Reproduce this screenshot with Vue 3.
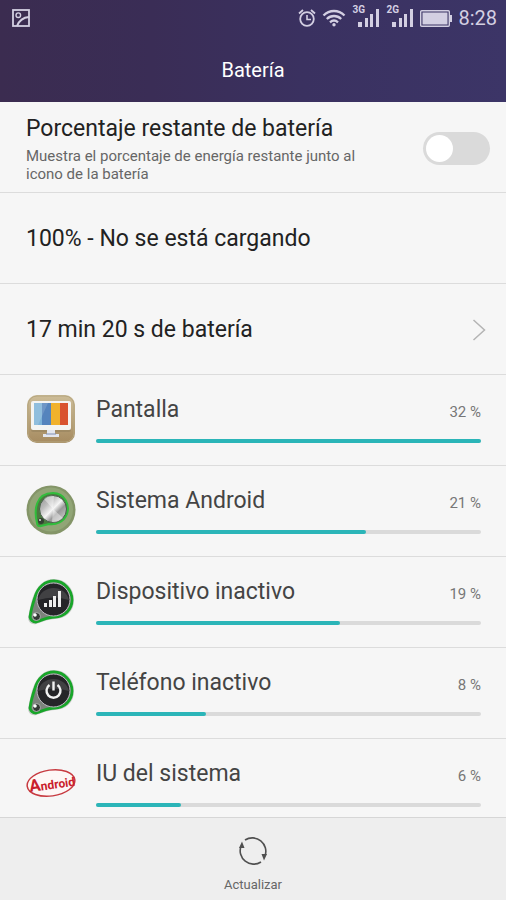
<script setup>
import { ref } from 'vue'

const showPercentage = ref(false)

const usage = [
  { id: 'screen', name: 'Pantalla', percent: 32, bar: 100 },
  { id: 'system', name: 'Sistema Android', percent: 21, bar: 70 },
  { id: 'idle', name: 'Dispositivo inactivo', percent: 19, bar: 63.4 },
  { id: 'phone', name: 'Teléfono inactivo', percent: 8, bar: 28.5 },
  { id: 'ui', name: 'IU del sistema', percent: 6, bar: 22 },
]
</script>

<template>
  <div class="battery-page">
    <header class="header">
      <div class="status-bar">
        <svg class="picture-icon" viewBox="0 0 18 18" width="18" height="18">
          <rect x="1" y="1" width="16" height="16" fill="none" stroke="currentColor" stroke-width="1.8" />
          <circle cx="6.3" cy="6.2" r="2.3" fill="none" stroke="currentColor" stroke-width="1.4" />
          <path d="M5 17C7 12 10 8.500 17 8" fill="none" stroke="currentColor" stroke-width="2" />
        </svg>
        <div class="status-right">
          <svg viewBox="0 0 18 20" width="18" height="20" fill="none" stroke="currentColor">
            <circle cx="9" cy="11" r="6.800" stroke-width="1.8" />
            <path d="M9 7v4.500h4" stroke-width="1.6" />
            <path d="M1 5.500L5 2M17 5.500L13 2" stroke-width="1.8" />
          </svg>
          <svg viewBox="0 0 24 18" width="24" height="18" fill="none" stroke="currentColor" stroke-width="2.300">
            <path d="M1.500 6.500C7.500 .5 16.500 .5 22.500 6.500" />
            <path d="M4.800 10C9 6 15 6 19.200 10" />
            <path d="M8 13.300C10.500 11 13.500 11 16 13.300" />
            <circle cx="12" cy="15.700" r="1.700" fill="currentColor" stroke="none" />
          </svg>
          <div v-for="net in ['3G', '2G']" :key="net" class="signal">
            <span>{{ net }}</span>
            <svg viewBox="0 0 22 18" width="22" height="18" fill="currentColor">
              <rect x="0" y="13" width="4" height="5" />
              <rect x="7" y="9" width="3" height="9" />
              <rect x="12" y="5" width="3" height="13" />
              <rect x="18" y="0" width="3" height="18" />
            </svg>
          </div>
          <svg class="battery-icon" viewBox="0 0 32 17" width="32" height="17">
            <rect x=".7" y=".7" width="28.600" height="15.600" rx="1" fill="none" stroke="currentColor" stroke-width="1.400" />
            <rect x="2.500" y="2.500" width="25" height="12" fill="currentColor" />
            <rect x="29.500" y="5" width="2.500" height="7" fill="currentColor" />
          </svg>
          <span class="clock">8:28</span>
        </div>
      </div>
      <h1>Batería</h1>
    </header>

    <main class="content">
      <label class="row setting">
        <span class="setting-text">
          <span class="label">Porcentaje restante de batería</span>
          <span class="hint">Muestra el porcentaje de energía restante junto al icono de la batería</span>
        </span>
        <input v-model="showPercentage" class="switch" type="checkbox" role="switch" />
      </label>

      <div class="row">
        <span class="label">100% - No se está cargando</span>
      </div>

      <a class="row link" href="#">
        <span class="label">17 min 20 s de batería</span>
        <svg viewBox="0 0 14 22" width="14" height="22" fill="none" stroke="#b4b4b4" stroke-width="1.500">
          <path d="M1.500 1L12.500 11L1.500 21" />
        </svg>
      </a>

      <div v-for="item in usage" :key="item.id" class="row usage">
        <!-- monitor -->
        <svg v-if="item.id === 'screen'" class="app-icon" viewBox="0 0 50 50">
          <defs>
            <linearGradient id="tan" x1="0" y1="0" x2="0" y2="1">
              <stop offset="0" stop-color="#cdbd98" />
              <stop offset="1" stop-color="#a68b60" />
            </linearGradient>
          </defs>
          <rect x="1" y="1" width="48" height="48" rx="10" fill="url(#tan)" />
          <rect x="2" y="2" width="46" height="46" rx="9" fill="none" stroke="#b5a680" />
          <rect x="5" y="9" width="40" height="29" rx="2" fill="#8f7d59" opacity=".5" />
          <rect x="5" y="7" width="40" height="29" rx="2" fill="#f4f4f2" />
          <rect x="8" y="9" width="8" height="22" fill="#7db3d8" />
          <rect x="16" y="9" width="9" height="22" fill="#5584bd" />
          <rect x="25" y="9" width="9" height="22" fill="#f1b22c" />
          <rect x="34" y="9" width="8" height="22" fill="#d9532f" />
          <path d="M8 9h14L12 31H8z" fill="#fff" opacity=".15" />
          <path d="M21 36h8v4h4v3H17v-3h4z" fill="#e4e7ef" />
          <path d="M20 40h10" stroke="#8190b4" />
        </svg>

        <!-- metal dial -->
        <svg v-else-if="item.id === 'system'" class="app-icon" viewBox="0 0 50 50">
          <defs>
            <linearGradient id="metal" x1="0" y1="0" x2="1" y2="1">
              <stop offset="0" stop-color="#8c8c8c" />
              <stop offset=".3" stop-color="#bdbdbd" />
              <stop offset=".5" stop-color="#f5f5f5" />
              <stop offset=".65" stop-color="#999" />
              <stop offset="1" stop-color="#ddd" />
            </linearGradient>
          </defs>
          <circle cx="25" cy="25" r="24.500" fill="#849568" />
          <circle cx="25" cy="24.500" r="22" fill="#91a576" />
          <path d="M11 38C8 26 9 8 27 8C39 8 44 20 41 29C38 37 30 40 23 39L15 41Q11 42 11 38z" fill="#4a7b3f" stroke="#31bd3c" stroke-width="2" />
          <circle cx="27" cy="24" r="13.500" fill="url(#metal)" stroke="#48604a" />
          <path d="M27 24L18 14Q22 10 28 11zM27 24L37 33Q32 38 26 37z" fill="#fff" opacity=".4" />
          <circle cx="15" cy="36" r="3" fill="#344332" />
          <circle cx="14" cy="35" r="1" fill="#ddd" />
        </svg>

        <!-- dark badge with signal bars or power symbol -->
        <svg v-else-if="item.id === 'idle' || item.id === 'phone'" class="app-icon" viewBox="0 0 50 50">
          <path d="M3 42C5 32 6 26 8 21C12 10 19 4 28 4C39 4 47 13 47 24C47 35 39 42 29 42C22 42 17 45 10 47Q4 48 3 42z" fill="#9ca39c" stroke="#c5c9c5" stroke-width="2" />
          <path d="M4 41C5 33 7 27 9 21C12 11 19 5 28 5C38 5 46 14 46 24C46 34 38 41 29 41C21 41 17 44 10 46Q5 46 4 41z" fill="#7c837c" stroke="#18a629" stroke-width="2.800" />
          <circle cx="27.500" cy="23.500" r="16.500" fill="#252528" stroke="#bdb9c1" stroke-width="1" />
          <path d="M12 24A16 16 0 0 1 43 24Q28 19 12 24z" fill="#fff" opacity=".13" />
          <circle cx="10.500" cy="40.500" r="4" fill="#343936" stroke="#adb2ae" />
          <circle cx="9" cy="39" r="1.800" fill="#fff" />
          <g v-if="item.id === 'idle'" fill="#eee">
            <rect x="18" y="27" width="3" height="4" />
            <rect x="23" y="24" width="3" height="7" />
            <rect x="27" y="20" width="3" height="11" />
            <rect x="32" y="15" width="3" height="16" />
          </g>
          <path v-else d="M23.500 18A7 7 0 1 0 31.500 18M27.500 14.500v9" fill="none" stroke="#f2f2f2" stroke-width="2.400" />
        </svg>

        <!-- red wordmark -->
        <svg v-else class="app-icon" viewBox="0 0 50 50">
          <g transform="rotate(-8 25 25)" fill="#c9202b">
            <ellipse cx="25" cy="25" rx="24" ry="13" fill="#fdf7f6" stroke="#c73a40" stroke-width="1.500" />
            <text class="logo-text" x="3" y="31"><tspan class="logo-initial">A</tspan>ndroid</text>
          </g>
        </svg>

        <div class="usage-body">
          <div class="usage-head">
            <span class="usage-name">{{ item.name }}</span>
            <span class="usage-percent">{{ item.percent }} %</span>
          </div>
          <div class="track">
            <div class="fill" :style="{ width: item.bar + '%' }"></div>
          </div>
        </div>
      </div>
    </main>

    <footer class="footer">
      <button type="button" class="refresh">
        <svg viewBox="0 0 30 30" width="30" height="30">
          <path d="M7 4A13.500 13.500 0 0 1 27 20M23 26A13.500 13.500 0 0 1 3 10" fill="none" stroke="#505050" stroke-width="1.600" />
          <path d="M4 5.500L6.500 12L1 12z M26 24.500L23.500 18L29 18z" fill="#505050" />
        </svg>
        <span>Actualizar</span>
      </button>
    </footer>
  </div>
</template>

<style>
body {
  margin: 0;
  background: #f6f6f6;
}
</style>

<style scoped>
.battery-page {
  display: flex;
  flex-direction: column;
  height: 100vh;
  font-family: Roboto, "Liberation Sans", sans-serif;
  color: #222;
}

.header {
  flex: none;
  height: 102px;
  background: linear-gradient(90deg, #3b2c50 0%, #3a2d56 30%, #3a3160 60%, #3c3567 100%);
  color: #fff;
}

.status-bar {
  display: flex;
  align-items: center;
  justify-content: space-between;
  height: 36px;
  padding: 0 9px 0 12px;
  color: #d3cfe2;
}

.status-right {
  display: flex;
  align-items: center;
  gap: 6px;
}

.signal {
  position: relative;
  display: flex;
  padding-left: 6px;
}

.signal span {
  position: absolute;
  top: -4px;
  left: 0;
  font-size: 10px;
  line-height: 10px;
  font-weight: 700;
}

.clock {
  font-size: 20px;
  line-height: 24px;
}

h1 {
  margin: 0;
  font-size: 20px;
  line-height: 68px;
  font-weight: 400;
  text-align: center;
}

.content {
  flex: 1;
  min-height: 0;
  overflow-y: auto;
  scrollbar-width: none;
}

.row {
  display: flex;
  align-items: center;
  justify-content: space-between;
  box-sizing: border-box;
  height: 91px;
  padding: 2px 20px 0 26px;
  border-bottom: 1px solid #dcdcdc;
}

.setting {
  padding-right: 16px;
}

.setting-text {
  display: flex;
  flex-direction: column;
  gap: 4px;
  max-width: 360px;
  padding-top: 2px;
}

.label {
  font-size: 23px;
  line-height: 28px;
}

.hint {
  font-size: 15px;
  line-height: 18px;
  color: #666;
}

.switch {
  appearance: none;
  flex: none;
  display: flex;
  box-sizing: border-box;
  width: 67px;
  height: 33px;
  margin: 0;
  padding: 3px;
  border-radius: 17px;
  background: #dadada;
  cursor: pointer;
}

.switch::before {
  content: "";
  width: 27px;
  height: 27px;
  border-radius: 50%;
  background: #fff;
}

.switch:checked {
  justify-content: flex-end;
  background: #2bb5b8;
}

.link {
  color: inherit;
  text-decoration: none;
}

.usage {
  gap: 20px;
  padding: 0 25px 2px 26px;
}

.app-icon {
  flex: none;
  width: 50px;
  height: 50px;
}

.usage-body {
  flex: 1;
}

.usage-head {
  display: flex;
  align-items: center;
  justify-content: space-between;
  margin-bottom: 15px;
}

.usage-name {
  font-size: 23px;
  line-height: 28px;
  color: #444;
}

.usage-percent {
  padding-top: 4px;
  font-size: 15px;
  line-height: 18px;
  color: #777;
}

.track {
  height: 4px;
  border-radius: 2px;
  background: #dadada;
}

.fill {
  height: 4px;
  border-radius: 2px;
  background: #2bb5b8;
}

.logo-text {
  font-family: Roboto, sans-serif;
  font-size: 12px;
  font-weight: 700;
}

.logo-initial {
  font-size: 17px;
}

.footer {
  flex: none;
  display: flex;
  justify-content: center;
  box-sizing: border-box;
  height: 83px;
  border-top: 1px solid #d6d6d6;
  background: #eee;
}

.refresh {
  display: flex;
  flex-direction: column;
  align-items: center;
  gap: 10px;
  padding: 18px 12px 0;
  border: none;
  background: none;
  font-family: inherit;
  font-size: 13px;
  line-height: 18px;
  color: #666;
  cursor: pointer;
}
</style>
